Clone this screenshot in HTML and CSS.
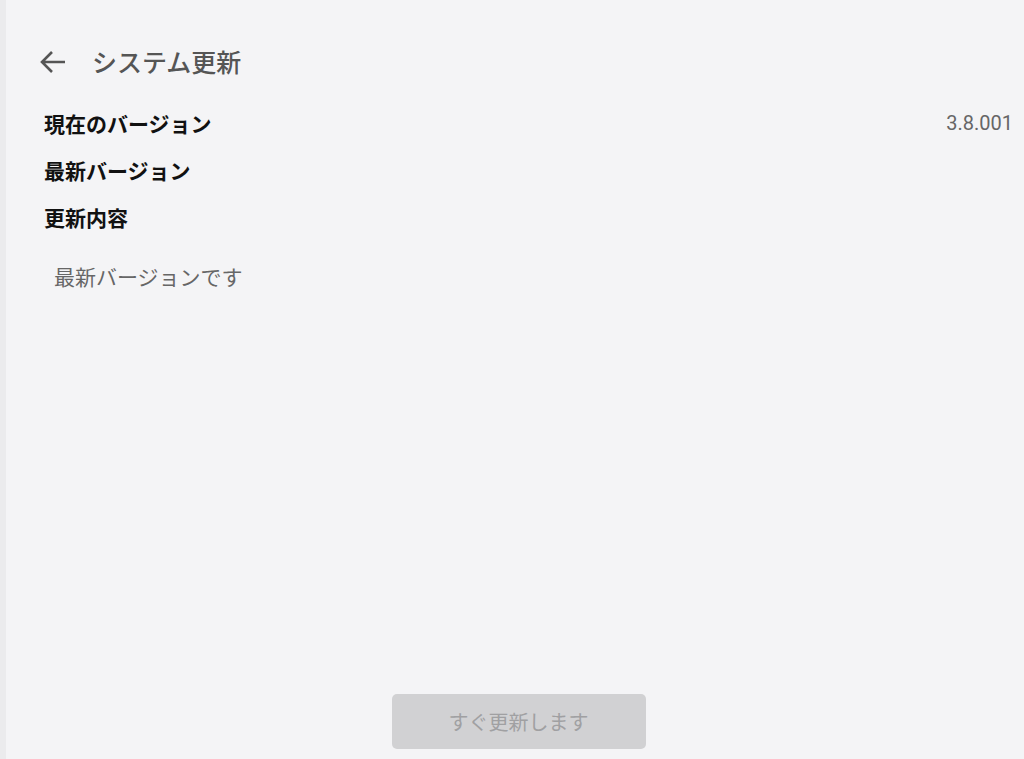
FILE: index.html
```html
<!DOCTYPE html>
<html lang="ja">
<head>
<meta charset="utf-8">
<title>システム更新</title>
<link rel="stylesheet" href="styles.css">
</head>
<body>
<div class="screen">
  <div class="stripe"></div>
  <main class="main">
    <header class="header">
      <svg class="back" width="26" height="24" viewBox="0 0 26 24" aria-hidden="true">
        <path d="M12 2 L2 12 L12 22 M2 12 H25" fill="none" stroke="#555" stroke-width="2.6" stroke-linecap="butt" stroke-linejoin="miter"/>
      </svg>
      <h1 class="title">システム更新</h1>
    </header>
    <section class="rows">
      <div class="row"><span class="label">現在のバージョン</span><span class="value">3.8.001</span></div>
      <div class="row"><span class="label">最新バージョン</span></div>
      <div class="row"><span class="label">更新内容</span></div>
    </section>
    <p class="notes">最新バージョンです</p>
    <div class="footer">
      <button class="update" disabled>すぐ更新します</button>
    </div>
  </main>
</div>
</body>
</html>
```

FILE: styles.css
```css
html, body {
  margin: 0;
  padding: 0;
}
body {
  background: #f4f4f6;
  font-family: "Noto Sans CJK JP", "Noto Sans", sans-serif;
}
.screen {
  display: flex;
  width: 1024px;
  height: 759px;
  overflow: hidden;
}
.stripe {
  width: 6px;
  flex: none;
  background: #ebebed;
}
.main {
  flex: 1;
  display: flex;
  flex-direction: column;
  padding: 38px 11px 0 34px;
}
.header {
  display: flex;
  align-items: center;
  height: 46px;
}
.back {
  display: block;
  margin-right: 26px;
  position: relative;
  top: 1px;
}
.title {
  margin: 0;
  font-size: 25px;
  font-weight: 500;
  color: #555;
  line-height: 46px;
}
.rows {
  margin-top: 15px;
  margin-left: 4px;
}
.row {
  display: flex;
  justify-content: space-between;
  align-items: center;
  height: 47px;
}
.label {
  font-size: 21px;
  font-weight: 700;
  color: #111;
}
.value {
  font-family: Roboto, "Noto Sans", sans-serif;
  font-size: 20px;
  color: #666;
}
.notes {
  margin: 21px 0 0 14px;
  font-size: 21px;
  line-height: 30px;
  color: #666;
}
.footer {
  margin-top: auto;
  display: flex;
  justify-content: center;
  padding: 0 16px 10px 0;
}
.update {
  width: 254px;
  height: 55px;
  border: none;
  border-radius: 5px;
  background: #d1d1d3;
  color: #a0a0a2;
  font-family: "Noto Sans CJK JP", "Noto Sans", sans-serif;
  font-size: 20px;
}
```
